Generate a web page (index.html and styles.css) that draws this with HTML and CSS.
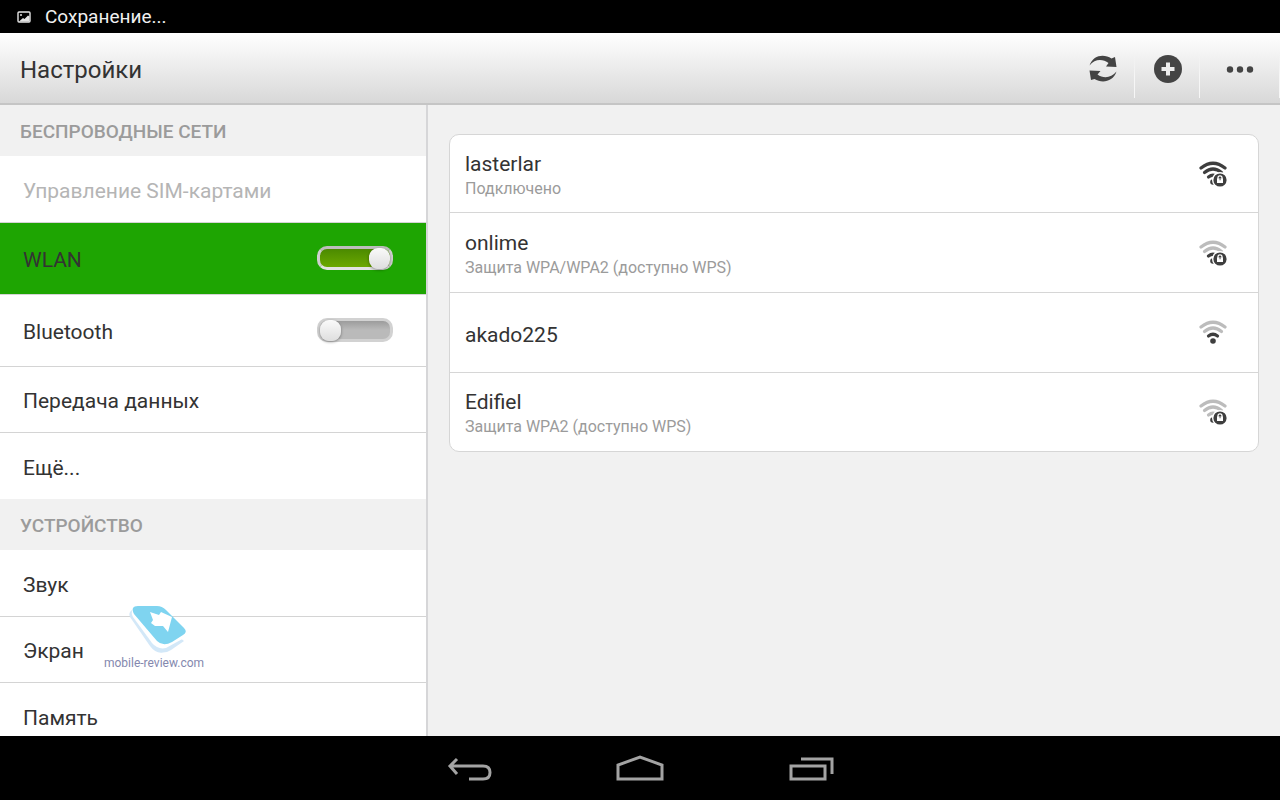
FILE: index.html
```html
<!DOCTYPE html>
<html lang="ru">
<head>
    <meta charset="UTF-8">
    <meta name="viewport" content="width=device-width, initial-scale=1.0">
    <title>Настройки</title>
    <link rel="stylesheet" href="styles.css">
</head>
<body>
    <!-- shared shapes -->
    <svg class="sprite" aria-hidden="true">
        <symbol id="lock" viewBox="0 0 28 28">
            <circle cx="21" cy="20" r="8" fill="#fff"/>
            <circle cx="21" cy="20" r="6.6" fill="#3e3e3e"/>
            <path d="M18 18.500h6V23h-6z" fill="#fff"/>
            <path d="M19 19v-1.200a2 2 0 0 1 4 0V19" fill="none" stroke="#fff" stroke-width="1.300"/>
            <path d="M20.600 18.400h.9v1.800h-.9z" fill="#3e3e3e"/>
        </symbol>
        <symbol id="arc-big" viewBox="0 0 28 28">
            <path d="M2 8Q14-1.500 26 8" fill="none" stroke="currentColor" stroke-width="3.200" stroke-linecap="round"/>
        </symbol>
        <symbol id="arc-mid" viewBox="0 0 28 28">
            <path d="M5.500 12.500Q14 5.500 22.500 12.500" fill="none" stroke="currentColor" stroke-width="3.200" stroke-linecap="round"/>
        </symbol>
        <symbol id="arc-small" viewBox="0 0 28 28">
            <path d="M9.500 17Q14 13.500 18.500 17" fill="none" stroke="currentColor" stroke-width="3.200" stroke-linecap="round"/>
        </symbol>
        <symbol id="dot" viewBox="0 0 28 28">
            <circle cx="14" cy="22" r="2.800" fill="currentColor"/>
        </symbol>
    </svg>

    <div class="status">
        <svg class="status-icon" viewBox="0 0 14 12" aria-hidden="true">
            <rect x="1" y="1" width="12" height="10" rx="1" fill="none" stroke="#e4e4e4" stroke-width="1.400"/>
            <path d="M2 10.500L6 7l1.500 1L11 4.500l1.500 1v5z" fill="#e4e4e4"/>
            <circle cx="4" cy="4" r="1" fill="#e4e4e4"/>
        </svg>
        <span>Сохранение...</span>
    </div>

    <header class="header">
        <h1>Настройки</h1>
        <div class="actions">
            <button type="button" aria-label="Обновить">
                <svg viewBox="0 0 30 30" width="30" height="30" fill="#444">
                    <path d="M1.500 11.500C5 1 16-.5 23.500 4.500l3.500-1.500 1.500 10-10.500-.5 2.500-3.500C15 5 7 4.500 1.500 11.500z"/>
                    <path d="M28.500 17.500C25 28 14 29.500 6.500 25L3 26 1.500 16.500l11 .5-3 3.500c5.500 4 13.500 4 19-3z"/>
                </svg>
            </button>
            <button type="button" aria-label="Добавить">
                <svg viewBox="0 0 30 30" width="30" height="30">
                    <circle cx="15" cy="15" r="14" fill="#444"/>
                    <path d="M15 8.500v13M8.500 15h13" stroke="#ececec" stroke-width="4"/>
                </svg>
            </button>
            <button type="button" class="more" aria-label="Меню">
                <svg viewBox="0 0 30 30" width="30" height="30" fill="#444">
                    <circle cx="5" cy="15.500" r="3.200"/>
                    <circle cx="15" cy="15.500" r="3.200"/>
                    <circle cx="25" cy="15.500" r="3.200"/>
                </svg>
            </button>
        </div>
    </header>

    <main class="main">
        <nav class="sidebar">
            <h2>Беспроводные сети</h2>
            <ul>
                <li><a class="disabled" href="#sim">Управление SIM-картами</a></li>
                <li class="tall active">
                    <a href="#wlan">WLAN</a>
                    <input type="checkbox" class="switch" aria-label="WLAN" checked>
                </li>
                <li class="tall">
                    <a href="#bluetooth">Bluetooth</a>
                    <input type="checkbox" class="switch" aria-label="Bluetooth">
                </li>
                <li><a href="#data">Передача данных</a></li>
                <li><a href="#more">Ещё...</a></li>
            </ul>
            <h2>Устройство</h2>
            <ul>
                <li><a href="#sound">Звук</a></li>
                <li><a href="#display">Экран</a></li>
                <li><a href="#memory">Память</a></li>
            </ul>

            <div class="watermark">
                <svg viewBox="0 0 60 50" width="60" height="50" aria-hidden="true">
                    <path d="M4 6Q0 9 2 13L22 42q6 8 13 6.500 4 0 8-2.500l13-9L12 4z" fill="#d3e8f8"/>
                    <path d="M4 6Q3 10 5 13L24 39q6 7 14 5l20-11-2-6z" fill="#fff"/>
                    <path d="M6 10Q2 2 10 2h19q5 0 9 4l18 18q4 4-1 7l-11 7q-9 5-15-1z" fill="#7fd4f0"/>
                    <path d="M22 8l9 3 2-3 11 5-4 15-5-6h-8l-4-3 2-3z" fill="#fff"/>
                </svg>
                <span>mobile-review.com</span>
            </div>
        </nav>

        <section class="content">
            <ul class="networks">
                <li>
                    <div class="network">
                        <div class="name">lasterlar</div>
                        <div class="info">Подключено</div>
                    </div>
                    <svg class="wifi" viewBox="0 0 28 28" aria-hidden="true">
                        <use href="#arc-big"/><use href="#arc-mid"/><use href="#arc-small"/><use href="#dot"/><use href="#lock"/>
                    </svg>
                </li>
                <li>
                    <div class="network">
                        <div class="name">onlime</div>
                        <div class="info">Защита WPA/WPA2 (доступно WPS)</div>
                    </div>
                    <svg class="wifi" viewBox="0 0 28 28" aria-hidden="true">
                        <use class="off" href="#arc-big"/><use class="off" href="#arc-mid"/><use href="#arc-small"/><use href="#dot"/><use href="#lock"/>
                    </svg>
                </li>
                <li>
                    <div class="network">
                        <div class="name">akado225</div>
                    </div>
                    <svg class="wifi" viewBox="0 0 28 28" aria-hidden="true">
                        <use class="off" href="#arc-big"/><use class="off" href="#arc-mid"/><use href="#arc-small"/><use href="#dot"/>
                    </svg>
                </li>
                <li>
                    <div class="network">
                        <div class="name">Edifiel</div>
                        <div class="info">Защита WPA2 (доступно WPS)</div>
                    </div>
                    <svg class="wifi" viewBox="0 0 28 28" aria-hidden="true">
                        <use class="off" href="#arc-big"/><use class="off" href="#arc-mid"/><use class="off" href="#arc-small"/><use href="#dot"/><use href="#lock"/>
                    </svg>
                </li>
            </ul>
        </section>
    </main>

    <footer class="navbar">
        <button type="button" aria-label="Назад">
            <svg viewBox="0 0 48 32" width="48" height="32">
                <path d="M13 6L6 13l7 8M6 13h33q7 0 7 6.500T39 26H25" />
            </svg>
        </button>
        <button type="button" aria-label="Домой">
            <svg viewBox="0 0 48 32" width="48" height="32">
                <path d="M2 26V12L24 4l22 8v14z"/>
            </svg>
        </button>
        <button type="button" aria-label="Недавние">
            <svg viewBox="0 0 48 32" width="48" height="32">
                <path d="M3 13h34v13H3zM13 6h31v15"/>
            </svg>
        </button>
    </footer>
</body>
</html>
```
FILE: styles.css
```css
* {
    box-sizing: border-box;
}
body {
    margin: 0;
    height: 100vh;
    display: flex;
    flex-direction: column;
    font-family: Roboto, "Noto Sans", sans-serif;
    font-size: 21px;
    line-height: 26px;
    color: #333;
    background-color: #f1f1f1;
    overflow: hidden;
}
h1, h2, ul {
    margin: 0;
    padding: 0;
    font-weight: normal;
    list-style: none;
}
button {
    padding: 0;
    border: none;
    background: none;
    cursor: pointer;
}
svg {
    display: block;
}
.sprite {
    position: absolute;
    width: 0;
    height: 0;
}

/* status bar */
.status {
    flex: none;
    display: flex;
    align-items: center;
    gap: 14px;
    height: 33px;
    padding: 1px 17px 0;
    background-color: #000;
    color: #f0f0f0;
    font-size: 19px;
}
.status-icon {
    width: 14px;
    height: 12px;
}

/* title bar */
.header {
    flex: none;
    display: flex;
    justify-content: space-between;
    height: 72px;
    padding-left: 20px;
    background: linear-gradient(#fff, #d8d8d8);
    border-bottom: 2px solid #c5c5c5;
}
.header h1 {
    align-self: center;
    padding-top: 4px;
    font-size: 24px;
}
.actions {
    display: flex;
    align-items: stretch;
}
.actions button {
    display: flex;
    align-items: center;
    justify-content: center;
    width: 65px;
    padding: 2px 0 0 1px;
    border-right: 1px solid;
    border-image: linear-gradient(transparent 30%, #f6f6f6 60%, #f6f6f6 92%, transparent 92%) 1;
}
.actions .more {
    width: 80px;
}

/* layout */
.main {
    flex: 1;
    min-height: 0;
    display: flex;
}
.sidebar {
    position: relative;
    flex: none;
    width: 428px;
    overflow: hidden;
    background-color: #fff;
    border-right: 2px solid #d6d6d8;
}
.sidebar h2 {
    padding: 14px 20px 11px;
    background-color: #f1f1f1;
    color: #9b9b9b;
    font-size: 19px;
    font-weight: 500;
    text-transform: uppercase;
}
.sidebar li {
    display: flex;
    align-items: center;
    justify-content: space-between;
    height: 66px;
    padding: 3px 33px 0 23px;
    border-bottom: 1px solid #d4d4d4;
}
.sidebar li:first-child {
    height: 67px;
}
.sidebar li:last-child {
    border-bottom: none;
}
.sidebar .tall {
    height: 72px;
}
.sidebar .active {
    background-color: #1ea502;
}
.sidebar a {
    color: inherit;
    text-decoration: none;
}
.sidebar .disabled {
    color: #b5b5b5;
}

/* on/off switch */
.switch {
    appearance: none;
    display: flex;
    width: 76px;
    height: 24px;
    margin: 0 0 5px;
    border: 3px solid #d2d2d2;
    border-radius: 10px;
    background: linear-gradient(#9c9c9c, #bababa 50%);
}
.switch::before {
    content: "";
    width: 21px;
    height: 21px;
    margin-top: -1px;
    border-radius: 9px;
    background: linear-gradient(#fafafa, #dedede);
    box-shadow: 0 1px 3px rgba(0, 0, 0, 0.4);
}
.switch:checked {
    justify-content: flex-end;
    border-color: #bdbdbd #cfcfcf #e2e2e2;
    background: linear-gradient(#4b8a00, #6ba800);
}

/* watermark over the list */
.watermark {
    position: absolute;
    left: 104px;
    top: 499px;
    color: #8488ae;
    font-size: 12px;
    line-height: 18px;
    pointer-events: none;
}
.watermark svg {
    margin-left: 24px;
}

/* network list */
.content {
    flex: 1;
    padding: 29px 21px;
}
.networks {
    background-color: #fff;
    border: 1px solid #d6d6d6;
    border-radius: 10px;
}
.networks li {
    display: flex;
    align-items: center;
    justify-content: space-between;
    height: 80px;
    padding: 0 31px 0 15px;
    border-bottom: 1px solid #d6d6d6;
}
.networks li:first-child,
.networks li:last-child {
    height: 78px;
}
.networks li:last-child {
    border-bottom: none;
}
.network {
    padding-top: 4px;
}
.info {
    color: #9b9b9b;
    font-size: 16px;
    line-height: 24px;
}
.wifi {
    width: 28px;
    height: 28px;
    color: #3e3e3e;
}
.wifi .off {
    color: #bcbcbc;
}

/* navigation bar */
.navbar {
    flex: none;
    display: flex;
    align-items: center;
    justify-content: center;
    gap: 124px;
    height: 64px;
    padding-top: 2px;
    background-color: #000;
}
.navbar svg {
    fill: none;
    stroke: #a3a3a3;
    stroke-width: 3;
}
```
